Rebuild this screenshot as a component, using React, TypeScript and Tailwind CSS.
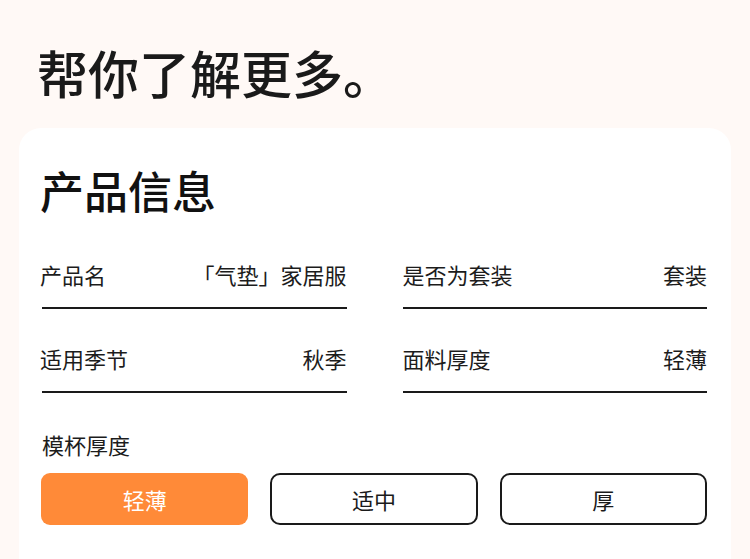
const rows: [string, string][][] = [
  [
    ["产品名", "「气垫」家居服"],
    ["是否为套装", "套装"],
  ],
  [
    ["适用季节", "秋季"],
    ["面料厚度", "轻薄"],
  ],
];

const options = ["轻薄", "适中", "厚"];

function Field({ label, value, inset }: { label: string; value: string; inset?: boolean }) {
  return (
    <div className="flex flex-col">
      <div
        className={
          inset
            ? "flex items-center justify-between h-[40px] text-[22px] leading-none text-[#1c1c1c] pl-[2px] pr-[2px]"
            : "flex items-center justify-between h-[40px] text-[22px] leading-none text-[#1c1c1c] pr-[2px]"
        }
      >
        <span>{label}</span>
        <span>{value}</span>
      </div>
      <div className="mt-[13px] h-[2px] bg-[#1a1a1a] mx-[2px]" />
    </div>
  );
}

export default function App() {
  return (
    <div
      className="w-[750px] h-[559px] overflow-hidden bg-[#fff9f6] flex flex-col"
      style={{ fontFamily: '"Noto Sans CJK SC", "Noto Sans", sans-serif' }}
    >
      <h1 className="pl-[37px] pt-[42px] text-[51px] leading-[60px] font-medium text-[#1a1a1a]">
        帮你了解更多。
      </h1>
      <div className="mt-[26px] mx-[19px] flex-1 bg-white rounded-t-[22px] px-[21px] pt-[34px]">
        <h2 className="text-[44px] leading-[56px] font-medium text-[#111]">产品信息</h2>
        <div className="mt-[36px] flex flex-col gap-[29px]">
          {rows.map((row, i) => (
            <div key={i} className="grid grid-cols-2 gap-x-[52px] pr-[1px]">
              {row.map(([l, v], j) => (
                <Field key={l} label={l} value={v} inset={j === 1} />
              ))}
            </div>
          ))}
        </div>
        <div className="mt-[36px] text-[22px] leading-[30px] text-[#1c1c1c] pl-[2px]">模杯厚度</div>
        <div className="mt-[14px] grid grid-cols-3 gap-x-[22px] pl-[1px] pr-[3px]">
          {options.map((o, i) => (
            <div
              key={o}
              className={
                i === 0
                  ? "h-[52px] rounded-[9px] bg-[#ff8a38] text-white flex items-center justify-center text-[22px]"
                  : "h-[52px] rounded-[10px] border-2 border-[#1a1a1a] text-[#1a1a1a] flex items-center justify-center text-[22px]"
              }
            >
              {o}
            </div>
          ))}
        </div>
      </div>
    </div>
  );
}
